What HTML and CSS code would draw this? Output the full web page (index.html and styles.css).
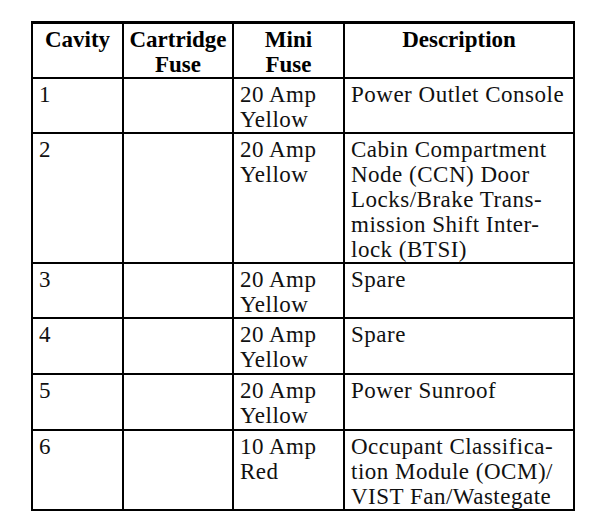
FILE: index.html
```html
<!DOCTYPE html>
<html>
<head>
<meta charset="utf-8">
<link rel="stylesheet" href="styles.css">
</head>
<body>
<table class="fuse-table">
  <thead>
    <tr>
      <th class="c1">Cavity</th>
      <th class="c2">Cartridge<br>Fuse</th>
      <th class="c3">Mini<br>Fuse</th>
      <th class="c4">Description</th>
    </tr>
  </thead>
  <tbody>
    <tr>
      <td>1</td><td></td><td>20 Amp<br>Yellow</td><td>Power Outlet Console</td>
    </tr>
    <tr>
      <td>2</td><td></td><td>20 Amp<br>Yellow</td><td>Cabin Compartment<br>Node (CCN) Door<br>Locks/Brake Trans-<br>mission Shift Inter-<br>lock (BTSI)</td>
    </tr>
    <tr>
      <td>3</td><td></td><td>20 Amp<br>Yellow</td><td>Spare</td>
    </tr>
    <tr class="tall">
      <td>4</td><td></td><td>20 Amp<br>Yellow</td><td>Spare</td>
    </tr>
    <tr class="tall">
      <td>5</td><td></td><td>20 Amp<br>Yellow</td><td>Power Sunroof</td>
    </tr>
    <tr>
      <td>6</td><td></td><td>10 Amp<br>Red</td><td>Occupant Classifica-<br>tion Module (OCM)/<br>VIST Fan/Wastegate</td>
    </tr>
  </tbody>
</table>
</body>
</html>
```
FILE: styles.css
```css
html, body {
  margin: 0;
  padding: 0;
  background: #ffffff;
}
body {
  padding-top: 21px;
  padding-left: 31px;
  font-family: "Liberation Serif", "Times New Roman", serif;
  font-size: 23px;
  letter-spacing: 0.5px;
  color: #111111;
}
.fuse-table {
  border-collapse: separate;
  border-spacing: 0;
  table-layout: fixed;
  width: 544px;
  border-top: 3px solid #000;
  border-left: 2px solid #000;
}
.fuse-table th,
.fuse-table td {
  box-sizing: border-box;
  border-right: 2px solid #000;
  border-bottom: 2px solid #000;
  padding: 3px 6px 0 6px;
  line-height: 25px;
  vertical-align: top;
  text-align: left;
  white-space: nowrap;
}
.fuse-table th {
  font-weight: bold;
  text-align: center;
  letter-spacing: 0;
  padding-left: 1px;
  padding-right: 1px;
  color: #000;
}
.c1 { width: 91px; }
.c2 { width: 110px; }
.c3 { width: 111px; }
.c4 { width: 230px; }
.tall td {
  padding-bottom: 1px;
}
```
